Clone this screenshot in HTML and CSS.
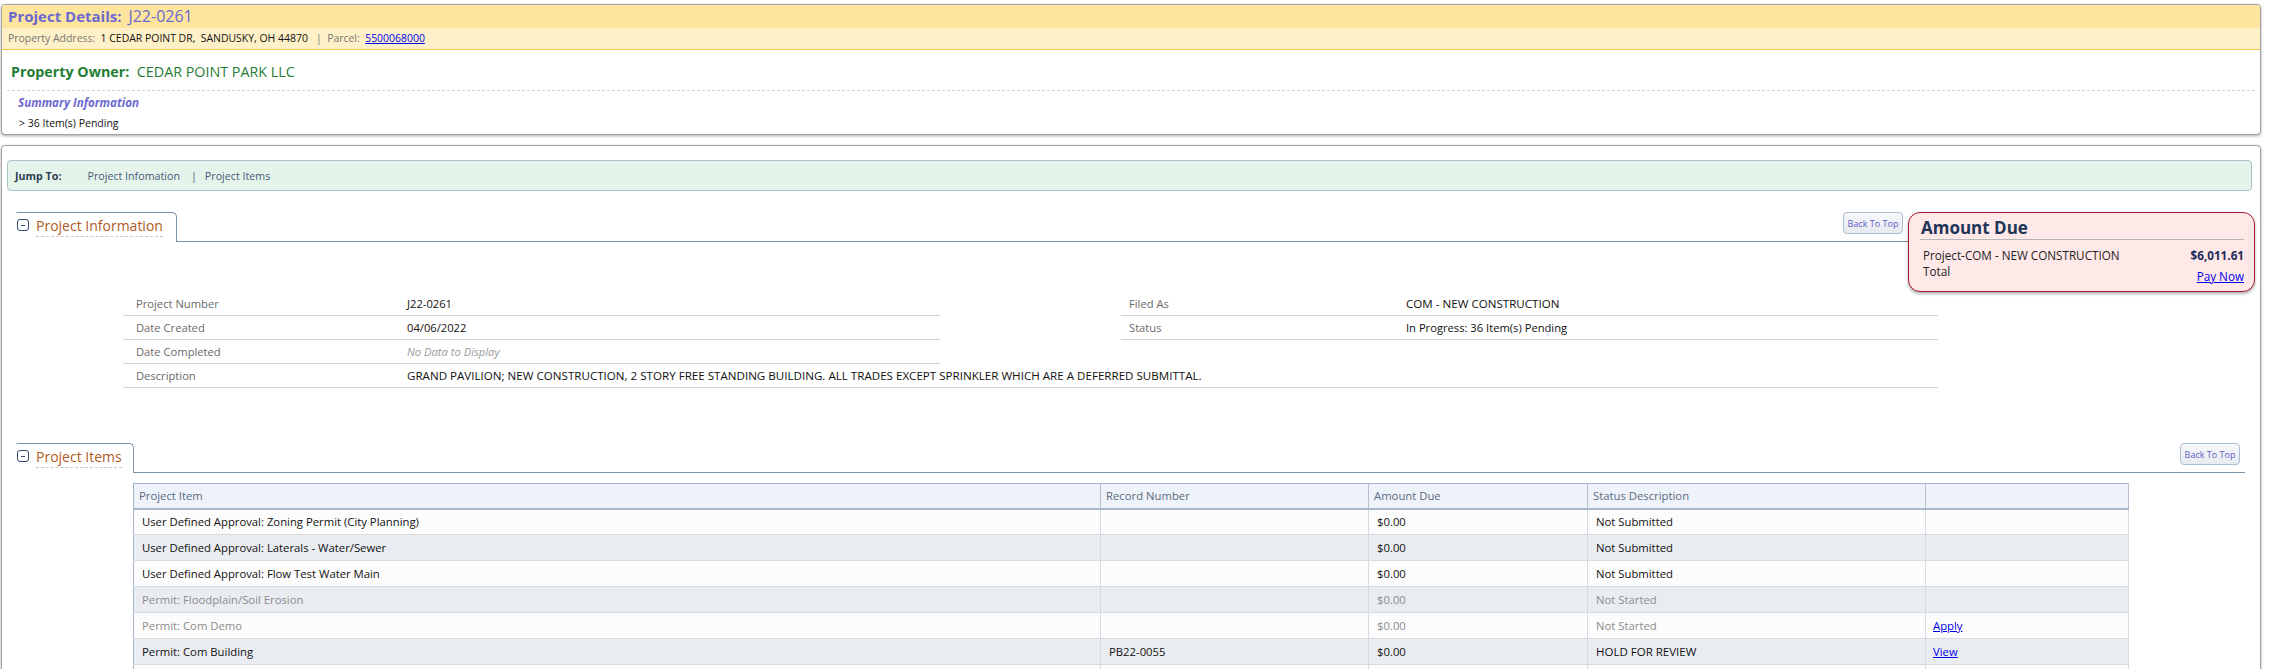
FILE: index.html
```html
<!DOCTYPE html>
<html lang="en">
<head>
<meta charset="utf-8">
<title>Project Details: J22-0261</title>
<link rel="stylesheet" href="styles.css">
</head>
<body>
<div class="page">
  <div class="card card-top">
    <div class="pd-title"><span class="lbl">Project Details:</span> <span class="val">J22-0261</span></div>
    <div class="pd-addr"><span class="muted">Property Address:</span>&nbsp; 1 CEDAR POINT DR,&nbsp; SANDUSKY, OH 44870 &nbsp; <span class="muted">|&nbsp; Parcel:</span>&nbsp; <a href="#">5500068000</a></div>
    <div class="owner"><b>Property Owner:</b>&nbsp; CEDAR POINT PARK LLC</div>
    <div class="summary">
      <div class="sum-title">Summary Information</div>
      <div class="sum-line">&gt; 36 Item(s) Pending</div>
    </div>
  </div>

  <div class="card card-main">
    <div class="jump">
      <b>Jump To:</b>
      <a href="#" class="jlink">Project Infomation</a>
      <span class="sep">|</span>
      <a href="#" class="jlink">Project Items</a>
    </div>

    <div class="info-row">
      <div class="sec-head">
        <div class="tab">
          <svg class="tog" width="12" height="12" viewBox="0 0 12 12"><rect x="0.5" y="0.5" width="11" height="11" rx="2.5" ry="2.5" fill="#fff" stroke="#2f4b70" stroke-width="1"/><path d="M4 6.5h4" stroke="#2f4b70" stroke-width="1"/></svg>
          <span class="tab-title">Project Information</span>
        </div>
        <button class="back-top">Back To Top</button>
      </div>
      <div class="amount">
        <h2>Amount Due</h2>
        <div class="amt-body">
          <div class="amt-left">
            <div>Project-COM - NEW CONSTRUCTION</div>
            <div>Total</div>
          </div>
          <div class="amt-right">
            <div class="amt-val">$6,011.61</div>
            <a href="#" class="pay">Pay Now</a>
          </div>
        </div>
      </div>
    </div>

    <div class="details">
      <div class="dl dl-left">
        <div class="dl-row"><span class="k">Project Number</span><span class="v">J22-0261</span></div>
        <div class="dl-row"><span class="k">Date Created</span><span class="v">04/06/2022</span></div>
        <div class="dl-row"><span class="k">Date Completed</span><span class="v nodata">No Data to Display</span></div>
      </div>
      <div class="dl dl-right">
        <div class="dl-row"><span class="k">Filed As</span><span class="v caps">COM - NEW CONSTRUCTION</span></div>
        <div class="dl-row"><span class="k">Status</span><span class="v">In Progress: 36 Item(s) Pending</span></div>
      </div>
      <div class="dl-row dl-full"><span class="k">Description</span><span class="v caps">GRAND PAVILION; NEW CONSTRUCTION, 2 STORY FREE STANDING BUILDING. ALL TRADES EXCEPT SPRINKLER WHICH ARE A DEFERRED SUBMITTAL.</span></div>
    </div>

    <div class="sec-head items-head">
      <div class="tab tab-items">
        <svg class="tog" width="12" height="12" viewBox="0 0 12 12"><rect x="0.5" y="0.5" width="11" height="11" rx="2.5" ry="2.5" fill="#fff" stroke="#2f4b70" stroke-width="1"/><path d="M4 6.5h4" stroke="#2f4b70" stroke-width="1"/></svg>
        <span class="tab-title">Project Items</span>
      </div>
      <button class="back-top">Back To Top</button>
    </div>

    <table class="items">
      <colgroup>
        <col class="c1"><col class="c2"><col class="c3"><col class="c4"><col class="c5">
      </colgroup>
      <thead>
        <tr><th>Project Item</th><th>Record Number</th><th>Amount Due</th><th>Status Description</th><th></th></tr>
      </thead>
      <tbody>
        <tr><td>User Defined Approval: Zoning Permit (City Planning)</td><td></td><td>$0.00</td><td>Not Submitted</td><td></td></tr>
        <tr class="alt"><td>User Defined Approval: Laterals - Water/Sewer</td><td></td><td>$0.00</td><td>Not Submitted</td><td></td></tr>
        <tr><td>User Defined Approval: Flow Test Water Main</td><td></td><td>$0.00</td><td>Not Submitted</td><td></td></tr>
        <tr class="alt off"><td>Permit: Floodplain/Soil Erosion</td><td></td><td>$0.00</td><td>Not Started</td><td></td></tr>
        <tr class="off"><td>Permit: Com Demo</td><td></td><td>$0.00</td><td>Not Started</td><td class="on"><a href="#">Apply</a></td></tr>
        <tr class="alt"><td>Permit: Com Building</td><td>PB22-0055</td><td>$0.00</td><td class="caps">HOLD FOR REVIEW</td><td><a href="#">View</a></td></tr>
        <tr><td>&nbsp;</td><td></td><td></td><td></td><td></td></tr>
      </tbody>
    </table>
  </div>
</div>
</body>
</html>
```

FILE: styles.css
```css
* { box-sizing: border-box; }
html, body { margin: 0; padding: 0; background: #fff; overflow: hidden; }
body { font-family: "Open Sans", "Noto Sans", sans-serif; color: #111; }
a { color: #0000ee; }

.page { padding: 4px 15px 0 1px; }

.card {
  border: 1px solid #a3a3a3;
  border-radius: 4px;
  background: #fff;
  box-shadow: 0 1px 3px rgba(0, 0, 0, 0.35);
}
.card-top { overflow: hidden; }

.pd-title {
  background: #fee59d;
  height: 23px;
  line-height: 23px;
  padding-left: 6px;
  font-size: 15px;
  color: #6b68cf;
}
.pd-title .lbl { font-weight: 700; }
.pd-title .val { font-size: 16px; margin-left: 3px; }

.pd-addr {
  background: #fff1c7;
  height: 22px;
  line-height: 21px;
  border-bottom: 1px solid #f5c842;
  padding-left: 6px;
  font-size: 10.45px;
  color: #111;
}
.muted { color: #777; }

.owner {
  margin: 0 5px;
  padding: 12px 0 8px 4px;
  line-height: 20px;
  font-size: 14.3px;
  color: #1f7d35;
  border-bottom: 1px dashed #d4d4d4;
}
.owner b { font-weight: 700; }

.summary { padding: 2px 0 1px 16px; }
.sum-title {
  font-weight: 700;
  font-style: italic;
  color: #6b68cf;
  font-size: 11.6px;
  line-height: 20px;
}
.sum-line { font-size: 10.5px; line-height: 20px; padding-left: 1px; }

.card-main { margin-top: 10px; padding: 14px 0 40px 0; }

.jump {
  margin: 0 8px 0 5px;
  height: 31px;
  border: 1px solid #a9c2c6;
  border-radius: 4px;
  background: #e5f4eb;
  display: flex;
  align-items: center;
  padding-left: 7px;
  font-size: 10.7px;
  color: #4a5878;
}
.jump b { color: #2c3e50; font-weight: 700; margin-right: 26px; }
.jump .jlink { color: #4a5878; text-decoration: none; }
.jump .sep { margin: 0 8px 0 11px; }

.info-row {
  display: flex;
  align-items: flex-start;
  margin: 21px 5px 0 14px;
}

.sec-head {
  display: flex;
  align-items: flex-end;
  height: 30px;
  border-bottom: 1px solid #7b91a7;
}
.info-row .sec-head { flex: 1; }

.tab {
  display: flex;
  align-items: flex-start;
  height: 30px;
  margin-bottom: -1px;
  background: #fff;
  border-top: 1px solid #7b91a7;
  border-right: 1px solid #7b91a7;
  border-top-right-radius: 5px;
  border-top-left-radius: 2px;
  padding: 6px 13px 0 1px;
}
.tab-items { padding-right: 11px; }
.tog { display: block; flex: none; margin-right: 7px; }
.tab-title {
  font-size: 14px;
  line-height: 16px;
  margin-top: -1px;
  color: #b05a1f;
  padding-bottom: 2px;
  border-bottom: 1px dashed #c8c8c8;
}

.back-top {
  margin: 0 5px 7px auto;
  width: 60px;
  height: 22px;
  padding: 0;
  border: 1px solid #a8bdd0;
  border-radius: 4px;
  background: linear-gradient(#f7f8fa, #e7eaf0);
  font-family: "Open Sans", "Noto Sans", sans-serif;
  font-size: 9px;
  color: #6060c8;
  cursor: pointer;
}

.amount {
  flex: none;
  width: 347px;
  height: 80px;
  margin-top: 0;
  border: 1px solid #a51c2c;
  border-radius: 12px;
  background: #ffe8e8;
  box-shadow: 0 2px 3px rgba(0, 0, 0, 0.3);
  padding: 4px 10px 0 11px;
}
.amount h2 {
  margin: 0;
  font-size: 17px;
  line-height: 22px;
  font-weight: 700;
  color: #1d3557;
  border-bottom: 1px solid #b7b7b7;
  padding-left: 1px;
}
.amt-body {
  display: grid;
  grid-template-columns: 1fr auto;
  margin-top: 7px;
  padding-left: 3px;
  font-size: 11.7px;
  line-height: 16px;
  color: #222;
}
.amt-right { text-align: right; }
.amt-val { font-weight: 700; color: #1d2b5a; }
.pay { display: inline-block; margin-top: 5px; }

.details {
  display: grid;
  grid-template-columns: 817px 181px 817px;
  width: 1815px;
  margin-left: 121px;
  font-size: 11.2px;
}
.dl-left { grid-column: 1; }
.dl-right { grid-column: 3; }
.dl-row {
  display: grid;
  grid-template-columns: 284px 1fr;
  align-items: center;
  height: 24px;
  border-bottom: 1px solid #d3d3d3;
}
.dl-full { grid-column: 1 / -1; }
.dl-row .k { color: #6a6a6a; padding-left: 13px; }
.dl-right .dl-row { grid-template-columns: 285px 1fr; }
.dl-right .dl-row .k { padding-left: 8px; }
.dl-row .v { color: #111; }
.dl-row .v.caps { font-size: 11.6px; }
.dl-row .nodata { color: #9a9a9a; font-style: italic; }

.items-head { margin: 55px 15px 0 14px; }

.items {
  margin: 10px 0 0 131px;
  width: 1995px;
  table-layout: fixed;
  border-collapse: collapse;
  border: 1px solid #a6b4c7;
  font-size: 11.3px;
}
.items .c1 { width: 967px; }
.items .c2 { width: 268px; }
.items .c3 { width: 219px; }
.items .c4 { width: 338px; }
.items .c5 { width: 203px; }
.items th {
  height: 25px;
  padding: 0 5px;
  text-align: left;
  font-weight: 400;
  color: #5b6b80;
  background: #eef2fa;
  border-right: 1px solid #b5c1d1;
  border-bottom: 2px solid #a9b7c9;
}
.items td {
  height: 26px;
  padding: 0 8px;
  color: #111;
  background: #fcfcfc;
  border-right: 1px solid #d6dbe2;
  border-bottom: 1px solid #d6dbe2;
}
.items td.caps { font-size: 11.5px; }
.items tr.alt td { background: #e9ecf1; }
.items tr.off td { color: #8c8c8c; }
.items td a { color: #0000ee; }
.items td:nth-child(5) { padding-left: 7px; }
```
